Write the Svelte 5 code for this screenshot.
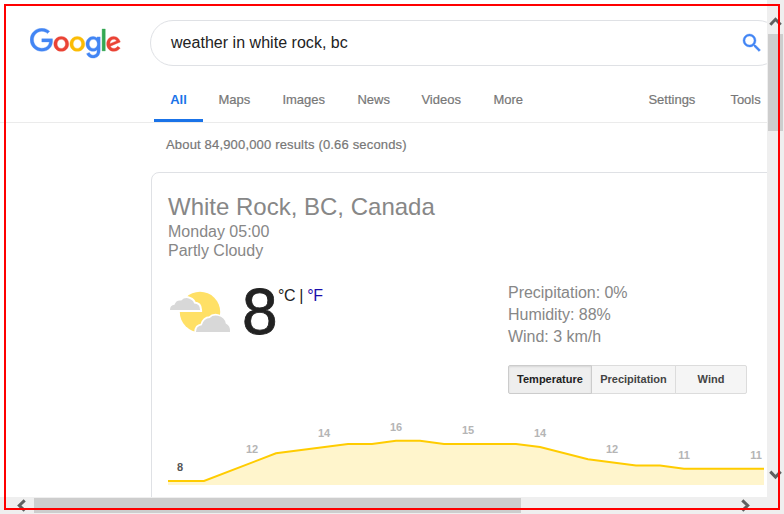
<script>
  const tabs = [
    { label: 'Maps', w: 64 },
    { label: 'Images', w: 75 },
    { label: 'News', w: 64 },
    { label: 'Videos', w: 72 },
    { label: 'More', w: 155 },
    { label: 'Settings', w: 82 },
    { label: 'Tools', w: 34 }
  ];
  const temps = [
    { t: 8, x: 180, y: 471 },
    { t: 12, x: 252, y: 453 },
    { t: 14, x: 324, y: 437 },
    { t: 16, x: 396, y: 431 },
    { t: 15, x: 468, y: 434 },
    { t: 14, x: 540, y: 437 },
    { t: 12, x: 612, y: 453 },
    { t: 11, x: 684, y: 459 },
    { t: 11, x: 756, y: 459 }
  ];
  const line = '168,481 204,481 276,453.3 348,444 372,444 396,440.8 420,440.8 444,444 516,444 540,447 588,459.3 636,465.5 660,465.5 684,468.7 764,468.7';
</script>

<div class="window">
  <main class="page">
    <header>
      <svg class="logo" viewBox="0 0 272 92" width="91" height="31" preserveAspectRatio="none" aria-label="Google">
        <path fill="#EA4335" stroke="#EA4335" d="M115.75 47.18c0 12.77-9.99 22.18-22.25 22.18s-22.25-9.41-22.25-22.18C71.25 34.32 81.24 25 93.5 25s22.25 9.32 22.25 22.18zm-9.74 0c0-7.98-5.79-13.44-12.51-13.44S80.99 39.2 80.99 47.18c0 7.9 5.79 13.44 12.51 13.44s12.51-5.55 12.51-13.44z"/>
        <path fill="#FBBC05" stroke="#FBBC05" d="M163.75 47.18c0 12.77-9.99 22.18-22.25 22.18s-22.25-9.41-22.25-22.18c0-12.85 9.99-22.18 22.25-22.18s22.25 9.32 22.25 22.18zm-9.74 0c0-7.98-5.79-13.44-12.51-13.44s-12.51 5.46-12.51 13.44c0 7.9 5.79 13.44 12.51 13.44s12.51-5.55 12.51-13.44z"/>
        <path fill="#4285F4" stroke="#4285F4" d="M209.75 26.34v39.82c0 16.38-9.66 23.07-21.08 23.07-10.75 0-17.22-7.19-19.66-13.07l8.48-3.53c1.51 3.61 5.21 7.87 11.17 7.87 7.31 0 11.84-4.51 11.84-13v-3.19h-.34c-2.18 2.69-6.38 5.04-11.68 5.04-11.09 0-21.25-9.66-21.25-22.09 0-12.52 10.16-22.26 21.25-22.26 5.29 0 9.49 2.35 11.68 4.96h.34v-3.61h9.25zm-8.56 20.92c0-7.81-5.21-13.52-11.84-13.52-6.72 0-12.35 5.71-12.35 13.52 0 7.73 5.63 13.36 12.35 13.36 6.63 0 11.84-5.63 11.84-13.36z"/>
        <path fill="#34A853" stroke="#34A853" d="M225 3v65h-9.5V3h9.5z"/>
        <path fill="#EA4335" stroke="#EA4335" d="M262.02 54.48l7.56 5.04c-2.44 3.61-8.32 9.83-18.48 9.83-12.6 0-22.01-9.74-22.01-22.18 0-13.19 9.49-22.18 20.92-22.18 11.51 0 17.14 9.16 18.98 14.11l1.01 2.52-29.65 12.28c2.27 4.45 5.8 6.72 10.75 6.72 4.96 0 8.4-2.44 10.92-6.14zm-23.27-7.98l19.82-8.23c-1.09-2.77-4.37-4.7-8.23-4.7-4.95 0-11.84 4.37-11.59 12.93z"/>
        <path fill="#4285F4" stroke="#4285F4" d="M35.29 41.41V32H67c.31 1.64.47 3.58.47 5.68 0 7.06-1.93 15.79-8.15 22.01-6.05 6.3-13.78 9.66-24.02 9.66C16.32 69.35.36 53.89.36 34.91.36 15.93 16.32.47 35.3.47c10.5 0 17.98 4.12 23.6 9.49l-6.64 6.64c-4.03-3.78-9.49-6.72-16.97-6.72-13.86 0-24.7 11.17-24.7 25.03 0 13.86 10.84 25.03 24.7 25.03 8.99 0 14.11-3.61 17.39-6.89 2.66-2.66 4.41-6.46 5.1-11.65l-22.49.01z"/>
      </svg>
      <div class="search">
        <span>weather in white rock, bc</span>
        <svg width="24" height="24" viewBox="0 0 24 24">
          <path fill="#4285F4" stroke="#4285F4" stroke-width=".4" d="M15.5 14h-.79l-.28-.27A6.47 6.47 0 0 0 16 9.5 6.5 6.5 0 1 0 9.5 16c1.61 0 3.09-.59 4.23-1.57l.27.28v.79l5 4.99L20.49 19zm-6 0a4.5 4.5 0 1 1 0-9 4.5 4.5 0 0 1 0 9z"/>
        </svg>
      </div>
    </header>
    <nav>
      <b class="active">All</b>
      {#each tabs as tab}
        <span class="tab" style="width:{tab.w}px">{tab.label}</span>
      {/each}
    </nav>
    <p class="stats">About 84,900,000 results (0.66 seconds)</p>
    <section class="card">
      <h1>White Rock, BC, Canada</h1>
      <div class="sub">Monday 05:00</div>
      <div class="sub">Partly Cloudy</div>
      <div class="now">
        <svg class="sky" width="64" height="64" viewBox="168 280 64 64">
          <circle cx="200" cy="312" r="20.2" fill="#ffe066"/>
          <path d="M170 310q0-5 4.5-5.2q1.5-5 6.8-4.2q3.5-3.8 8.2-1.8q4 1.6 4.6 4.6q6 .3 6 6.6z" fill="none" stroke="#fff" stroke-width="4"/>
          <path d="M170 310q0-5 4.5-5.2q1.5-5 6.8-4.2q3.5-3.8 8.2-1.8q4 1.6 4.6 4.6q6 .3 6 6.6z" fill="#d8d8d8"/>
          <path d="M196 332q0-6 5.8-6.8q2-7 8-7.2q3-3.2 8-2.2q7 1.7 8 7.7q4.8 2.3 4.2 8.5z" fill="none" stroke="#fff" stroke-width="3.4"/>
          <path d="M196 332q0-6 5.8-6.8q2-7 8-7.2q3-3.2 8-2.2q7 1.7 8 7.7q4.8 2.3 4.2 8.5z" fill="#d8d8d8"/>
        </svg>
        <span class="temp">8</span>
        <span class="units">°C | <a>°F</a></span>
        <div class="details">
          <div>Precipitation: 0%</div>
          <div>Humidity: 88%</div>
          <div>Wind: 3 km/h</div>
          <div class="buttons">
            <b class="on">Temperature</b><b>Precipitation</b><b>Wind</b>
          </div>
        </div>
      </div>
      <svg class="chart" width="600" height="84" viewBox="168 413 600 84">
        <polygon points="168,485 {line} 764,485" fill="#fff5cc"/>
        <polyline points={line} fill="none" stroke="#ffcc00" stroke-width="2"/>
        {#each temps as p, i}
          <text class:first={i === 0} x={p.x} y={p.y} text-anchor="middle">{p.t}</text>
        {/each}
      </svg>
    </section>
  </main>
  <div class="vbar">
    <svg width="17" height="34" viewBox="0 0 17 34"><path d="M3.3 24.7L8.5 19.3L13.7 24.7" /></svg>
    <div class="vthumb"></div>
    <svg class="down" width="17" height="34" viewBox="0 0 17 34"><path d="M3.3 8.6L8.5 14L13.7 8.6" /></svg>
  </div>
  <div class="hbar">
    <svg width="34" height="17" viewBox="0 0 34 17"><path d="M24.7 3.3L19.3 8.5L24.7 13.7" /></svg>
    <div class="hthumb"></div>
    <svg class="right" width="34" height="17" viewBox="0 0 34 17"><path d="M9.3 3.3L14.7 8.5L9.3 13.7" /></svg>
  </div>
  <div class="frame"></div>
</div>

<style>
  :global(body) { margin: 0; background: #fff; overflow: hidden; }
  .window {
    position: relative;
    display: grid;
    grid-template: 497px 17px / 767px 17px;
    width: 784px;
    height: 514px;
    overflow: hidden;
    font-family: 'Liberation Sans', Arial, sans-serif;
  }
  svg { display: block; flex: none; }
  .page { overflow: hidden; min-width: 0; background: #fff; }
  header { display: flex; height: 77px; width: 782px; align-items: flex-start; }
  .logo { margin: 28px 29px 0 30px; }
  .search {
    box-sizing: border-box;
    display: flex;
    align-items: center;
    width: 631px;
    height: 46px;
    margin-top: 20px;
    padding: 0 16px 0 20px;
    border: 1px solid #dfe1e5;
    border-radius: 23px;
    font-size: 16px;
    letter-spacing: 0.03px;
    color: #222;
    justify-content: space-between;
  }
  nav {
    display: flex;
    box-sizing: border-box;
    height: 46px;
    padding-left: 154px;
    border-bottom: 1px solid #ebebeb;
    font-size: 13px;
    line-height: 45px;
    white-space: nowrap;
    color: #777;
  }
  .active {
    box-sizing: border-box;
    width: 49px;
    height: 45px;
    margin-right: 15px;
    border-bottom: 3px solid #1a73e8;
    color: #1a73e8;
    text-align: center;
  }
  .tab, .stats { -webkit-text-stroke: 0.2px currentColor; }
  .tab { text-indent: 0.4px; }
  .stats { margin: 0; padding: 12px 0 0 166px; height: 37px; font-size: 13px; letter-spacing: 0.17px; line-height: 20px; color: #777; }
  .card {
    margin-left: 151px;
    width: 640px;
    height: 340px;
    box-sizing: border-box;
    border: 1px solid #dfe1e5;
    border-radius: 8px;
    padding: 19px 0 0 16px;
    color: #878787;
  }
  h1 { margin: 0; font-size: 24px; font-weight: 400; line-height: 30px; }
  .sub { font-size: 16px; line-height: 19px; }
  .now { display: flex; height: 133px; padding-top: 20px; }
  .temp { width: 35px; margin-left: 10px; font-size: 64px; line-height: 65px; color: #222; -webkit-text-stroke: 0.8px #222; }
  .units { margin: 6px 0 0 1px; width: 230px; font-size: 16px; letter-spacing: -0.35px; line-height: 20px; color: #222; }
  .units a { color: #1a0dab; }
  .details { font-size: 16px; line-height: 22px; padding-top: 2px; letter-spacing: -0.03px; }
  .buttons { display: flex; margin-top: 17px; font-size: 11px; letter-spacing: 0; line-height: 27px; color: #444; text-align: center; }
  .buttons b { box-sizing: border-box; width: 85px; height: 29px; border: 1px solid #dcdcdc; margin-right: -1px; background: #f5f5f5; }
  .buttons b:last-child { width: 72px; border-radius: 0 2px 2px 0; }
  .buttons .on { width: 84px; background: #eee; border-color: #ccc; color: #222; border-radius: 2px 0 0 2px; box-shadow: inset 0 1px 2px rgba(0, 0, 0, 0.1); z-index: 1; }
  .chart text { font-size: 11px; font-weight: 700; fill: #b5b5b5; }
  .chart text.first { fill: #555; }
  .vbar, .hbar { display: flex; background: #efefef; }
  .vbar { flex-direction: column; grid-column: 2; grid-row: 1; }
  .hbar { grid-column: 1 / 3; grid-row: 2; }
  .vbar path, .hbar path { fill: none; stroke: #606060; stroke-width: 3; }
  .vthumb { width: 15px; height: 97px; margin-left: 1px; background: #cdcdcd; }
  .hthumb { width: 487px; height: 15px; margin-top: 1px; background: #cdcdcd; }
  .down { margin-top: 332px; }
  .right { margin-left: 212px; }
  .frame { position: absolute; left: 4px; top: 4px; width: 772px; height: 502px; border: 2px solid #f00; pointer-events: none; }
</style>
